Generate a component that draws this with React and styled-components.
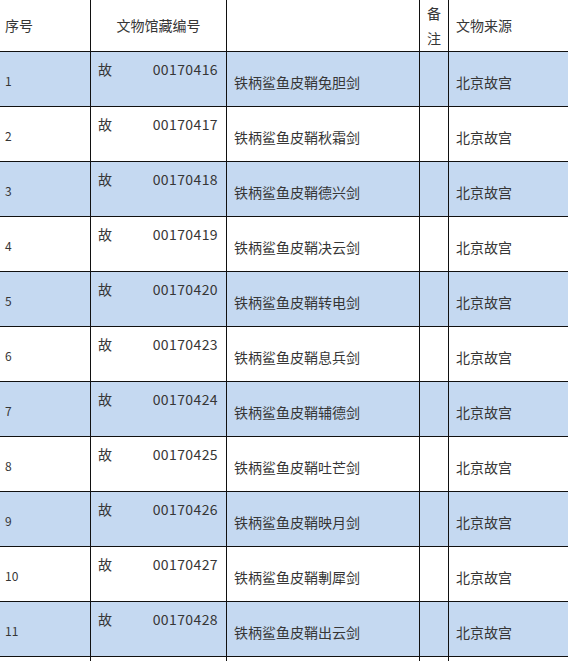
import React from "react";
import styled, { createGlobalStyle } from "styled-components";

const GlobalStyle = createGlobalStyle`
  html, body {
    margin: 0;
    padding: 0;
    overflow: hidden;
    background: #fff;
  }
  body {
    font-family: "Noto Sans CJK SC", "Noto Sans", sans-serif;
    color: #363636;
  }
`;

const Sheet = styled.div`
  display: grid;
  grid-template-columns: 91px 136px 193px 29px 160px;
  grid-template-rows: 52px;
  grid-auto-rows: 55px;
  width: 609px;
`;

const Cell = styled.div`
  box-sizing: border-box;
  border-right: 1px solid #111;
  border-bottom: 1px solid #111;
  background: ${(p) => (p.$shaded ? "#c5d9f1" : "#fff")};
  font-size: 14px;
  line-height: 18px;
  white-space: nowrap;
  overflow: hidden;
`;

const HeadCell = styled(Cell)`
  display: flex;
  align-items: center;
  justify-content: ${(p) => (p.$center ? "center" : "flex-start")};
  padding-left: ${(p) => p.$pad || "5px"};
  padding-bottom: 1px;
`;

const NoteHead = styled(HeadCell)`
  flex-direction: column;
  justify-content: center;
  line-height: 25px;
  padding: 0;
`;

const IndexCell = styled(Cell)`
  display: flex;
  align-items: center;
  padding: 4px 0 0 5px;
  font-size: 12px;
`;

const CodeCell = styled(Cell)`
  display: flex;
  justify-content: space-between;
  align-items: flex-start;
  padding: 8px 8px 0 7px;
`;

const Code = styled.span`
  letter-spacing: 0.4px;
`;

const TextCell = styled(Cell)`
  display: flex;
  align-items: center;
  padding: 6px 0 0 7px;
`;

const items = [
  ["00170416", "铁柄鲨鱼皮鞘兔胆剑"],
  ["00170417", "铁柄鲨鱼皮鞘秋霜剑"],
  ["00170418", "铁柄鲨鱼皮鞘德兴剑"],
  ["00170419", "铁柄鲨鱼皮鞘决云剑"],
  ["00170420", "铁柄鲨鱼皮鞘转电剑"],
  ["00170423", "铁柄鲨鱼皮鞘息兵剑"],
  ["00170424", "铁柄鲨鱼皮鞘辅德剑"],
  ["00170425", "铁柄鲨鱼皮鞘吐芒剑"],
  ["00170426", "铁柄鲨鱼皮鞘映月剑"],
  ["00170427", "铁柄鲨鱼皮鞘剸犀剑"],
  ["00170428", "铁柄鲨鱼皮鞘出云剑"],
];

const App = () => {
  return (
    <>
      <GlobalStyle />
      <Sheet>
        <HeadCell>序号</HeadCell>
        <HeadCell $center $pad="0">文物馆藏编号</HeadCell>
        <HeadCell />
        <NoteHead>
          <span>备</span>
          <span>注</span>
        </NoteHead>
        <HeadCell $pad="7px">文物来源</HeadCell>

        {items.map(([code, name], i) => {
          const shaded = i % 2 === 0;
          return (
            <React.Fragment key={code}>
              <IndexCell $shaded={shaded}>{i + 1}</IndexCell>
              <CodeCell $shaded={shaded}>
                <span>故</span>
                <Code>{code}</Code>
              </CodeCell>
              <TextCell $shaded={shaded}>{name}</TextCell>
              <Cell $shaded={shaded} />
              <TextCell $shaded={shaded}>北京故宫</TextCell>
            </React.Fragment>
          );
        })}

        {/* next row, only its top edge is on screen */}
        <Cell />
        <Cell />
        <Cell />
        <Cell />
        <Cell />
      </Sheet>
    </>
  );
};

export default App;
